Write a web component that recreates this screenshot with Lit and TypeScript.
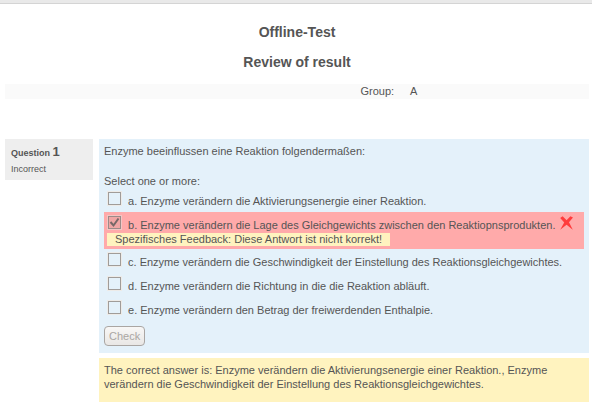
import { LitElement, html, css, svg } from "lit";
import { customElement } from "lit/decorators.js";
import { classMap } from "lit/directives/class-map.js";

interface Answer {
  id: string;
  text: string;
  checked?: boolean;
  feedback?: string;
}

const ANSWERS: Answer[] = [
  { id: "a", text: "Enzyme verändern die Aktivierungsenergie einer Reaktion." },
  {
    id: "b",
    text: "Enzyme verändern die Lage des Gleichgewichts zwischen den Reaktiopnsprodukten.",
    checked: true,
    feedback: "Spezifisches Feedback: Diese Antwort ist nicht korrekt!",
  },
  { id: "c", text: "Enzyme verändern die Geschwindigkeit der Einstellung des Reaktionsgleichgewichtes." },
  { id: "d", text: "Enzyme verändern die Richtung in die die Reaktion abläuft." },
  { id: "e", text: "Enzyme verändern den Betrag der freiwerdenden Enthalpie." },
];

const cross = svg`<path d="M0.2 2 L2.6 0.2 L6.6 4.2 L10.4 0.2 L13 1.6 L9 6.2 L12.8 13.8 L6.6 8.8 L0.2 13.8 L4.2 6.6 Z" fill="#ff3c3c"/>`;

@customElement("app-root")
export class AppRoot extends LitElement {
  static styles = css`
    :host {
      display: block;
      background: #fff;
      color: #555;
      font: 11px/14px "Liberation Sans", Arial, sans-serif;
    }
    .topbar {
      height: 3px;
      background: #e9e9e9;
      border-bottom: 1px solid #d4d4d4;
    }
    h1, h2 {
      margin: 0;
      font-size: 14px;
      line-height: 16px;
      font-weight: bold;
      text-align: center;
    }
    h1 { margin-top: 20px; }
    h2 { margin-top: 14px; }
    .page { padding: 0 3px 5px 5px; }
    .summary {
      width: 100%;
      margin-top: 14px;
      border-collapse: collapse;
      background: #fafafa;
    }
    .summary th, .summary td {
      padding: 0 8px;
      height: 15px;
      line-height: 15px;
      font-weight: normal;
    }
    .summary th { width: 68%; text-align: right; }
    .summary td { text-align: left; }
    .question {
      display: grid;
      grid-template-columns: 88px 1fr;
      gap: 6px;
      align-items: start;
      margin-top: 40px;
    }
    .info {
      padding: 5px 6px 4px;
      background: #eee;
      font-size: 9px;
    }
    h3 { margin: 0; font-size: 9px; line-height: 16px; }
    .number { font-size: 13px; }
    .state { line-height: 14px; margin-top: 1px; }
    .content { display: grid; gap: 5px; }
    .formulation {
      padding: 5px 5px 7px;
      background: #e4f1fa;
    }
    p { margin: 0; }
    fieldset { margin: 16px 0 0; padding: 0; border: 0; min-width: 0; }
    legend { padding: 0; }
    .row { padding: 4px 3px 2px; }
    .row.incorrect { padding-bottom: 3px; background: #ffaaaa; }
    .line { display: flex; gap: 7px; min-height: 18px; }
    .incorrect .line { min-height: 17px; }
    input {
      appearance: none;
      flex: none;
      width: 13px;
      height: 13px;
      margin: 0 0 0 1px;
      border: 1px solid #a09c99;
      background: transparent;
      box-shadow: 0 0 0 1px #edebe8;
    }
    input:checked {
      border-color: #9c8a88;
      background: url('data:image/svg+xml,<svg xmlns="http://www.w3.org/2000/svg" viewBox="0 0 11 11"><path d="M1.500 5l3 3.500 5-7" fill="none" stroke="%23776868" stroke-width="2"/></svg>') #f0a6a5;
      box-shadow: 0 0 0 1px #f2c6c4;
    }
    label { padding-top: 2px; }
    .cross { flex: none; width: 13px; height: 14px; margin-left: -2px; }
    .feedback {
      width: fit-content;
      padding: 0 8px;
      line-height: 13px;
      background: #fff3bf;
    }
    button {
      display: block;
      height: 20px;
      margin: 5px 0 0;
      padding: 0 4px;
      border: 1px solid #aaa6a3;
      border-radius: 4px;
      background: linear-gradient(#f8f7f6, #e9e7e5);
      color: #aaa6a3;
      font: inherit;
    }
    .outcome {
      padding: 5px 5px 11px;
      background: #fff3bf;
    }
  `;

  private row(a: Answer) {
    return html`
      <div class=${classMap({ row: true, incorrect: !!a.feedback })}>
        <div class="line">
          <input type="checkbox" id=${a.id} ?checked=${!!a.checked} disabled />
          <label for=${a.id}>${a.id}. ${a.text}</label>
          ${a.feedback
            ? html`<svg class="cross" viewBox="0 0 13 14" role="img" aria-label="Incorrect">${cross}</svg>`
            : null}
        </div>
        ${a.feedback ? html`<div class="feedback">${a.feedback}</div>` : null}
      </div>
    `;
  }

  render() {
    return html`
      <div class="topbar"></div>
      <main class="page">
        <h1>Offline-Test</h1>
        <h2>Review of result</h2>
        <table class="summary">
          <tr><th scope="row">Group:</th><td>A</td></tr>
        </table>
        <section class="question">
          <div class="info">
            <h3>Question <span class="number">1</span></h3>
            <div class="state">Incorrect</div>
          </div>
          <div class="content">
            <div class="formulation">
              <p>Enzyme beeinflussen eine Reaktion folgendermaßen:</p>
              <fieldset>
                <legend>Select one or more:</legend>
                ${ANSWERS.map((a) => this.row(a))}
              </fieldset>
              <button type="button" disabled>Check</button>
            </div>
            <div class="outcome">
              The correct answer is: Enzyme verändern die Aktivierungsenergie einer
              Reaktion., Enzyme verändern die Geschwindigkeit der Einstellung des
              Reaktionsgleichgewichtes.
            </div>
          </div>
        </section>
      </main>
    `;
  }
}
